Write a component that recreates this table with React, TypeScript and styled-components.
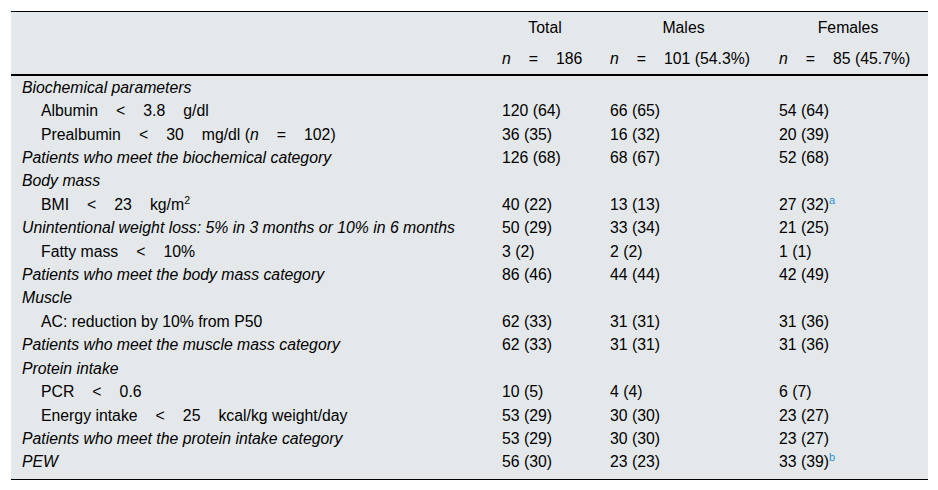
import React from "react";
import styled, { createGlobalStyle } from "styled-components";

const Global = createGlobalStyle`
  html, body { margin: 0; padding: 0; background: #ffffff; }
  body { font-family: "Liberation Sans", Arial, sans-serif; color: #000; }
`;

const Page = styled.div`
  padding: 11px 10px 0 11px;
`;

const Table = styled.table`
  width: 917px;
  border-collapse: collapse;
  table-layout: fixed;
  background: #e4e8eb;
  font-size: 15.8px;
  line-height: 17.4px;
  border-top: 1px solid #000;
  border-bottom: 1.5px solid #000;
`;

const Head = styled.thead`
  border-bottom: 2px solid #000;
`;

const HeadCell = styled.th<{ $left?: boolean }>`
  font-weight: normal;
  text-align: ${(p) => (p.$left ? "left" : "center")};
  padding: 7px 11px ${(p) => (p.$left ? "6px" : "7px")};
  white-space: nowrap;
`;

const Row = styled.tr<{ $last?: boolean }>`
  & > td {
    padding-bottom: ${(p) => (p.$last ? "8px" : "3px")};
  }
`;

const Label = styled.td<{ $indent?: boolean; $italic?: boolean }>`
  padding: 3px 11px 3px ${(p) => (p.$indent ? "30px" : "11px")};
  font-style: ${(p) => (p.$italic ? "italic" : "normal")};
  white-space: nowrap;
`;

const Value = styled.td`
  padding: 3px 11px;
  white-space: nowrap;
`;

const Sp = styled.span`
  display: inline-block;
  width: 18px;
`;

const Em = styled.i`
  font-style: italic;
`;

const Sup = styled.span`
  font-size: 10.5px;
  line-height: 0;
  vertical-align: baseline;
  position: relative;
  top: -6px;
`;

const Note = styled.span`
  font-size: 11px;
  line-height: 0;
  vertical-align: baseline;
  position: relative;
  top: -6px;
  color: #2a8fd4;
`;

type RowData = {
  label: React.ReactNode;
  kind: "head" | "item";
  total?: string;
  males?: string;
  females?: string;
  note?: string;
};

const rows: RowData[] = [
  { label: "Biochemical parameters", kind: "head" },
  {
    label: (
      <>
        Albumin<Sp />&lt;<Sp />3.8<Sp />g/dl
      </>
    ),
    kind: "item",
    total: "120 (64)",
    males: "66 (65)",
    females: "54 (64)",
  },
  {
    label: (
      <>
        Prealbumin<Sp />&lt;<Sp />30<Sp />mg/dl (<Em>n</Em>
        <Sp />=<Sp />
        102)
      </>
    ),
    kind: "item",
    total: "36 (35)",
    males: "16 (32)",
    females: "20 (39)",
  },
  {
    label: "Patients who meet the biochemical category",
    kind: "head",
    total: "126 (68)",
    males: "68 (67)",
    females: "52 (68)",
  },
  { label: "Body mass", kind: "head" },
  {
    label: (
      <>
        BMI<Sp />&lt;<Sp />23<Sp />kg/m<Sup>2</Sup>
      </>
    ),
    kind: "item",
    total: "40 (22)",
    males: "13 (13)",
    females: "27 (32)",
    note: "a",
  },
  {
    label: "Unintentional weight loss: 5% in 3 months or 10% in 6 months",
    kind: "head",
    total: "50 (29)",
    males: "33 (34)",
    females: "21 (25)",
  },
  {
    label: (
      <>
        Fatty mass<Sp />&lt;<Sp />10%
      </>
    ),
    kind: "item",
    total: "3 (2)",
    males: "2 (2)",
    females: "1 (1)",
  },
  {
    label: "Patients who meet the body mass category",
    kind: "head",
    total: "86 (46)",
    males: "44 (44)",
    females: "42 (49)",
  },
  { label: "Muscle", kind: "head" },
  {
    label: "AC: reduction by 10% from P50",
    kind: "item",
    total: "62 (33)",
    males: "31 (31)",
    females: "31 (36)",
  },
  {
    label: "Patients who meet the muscle mass category",
    kind: "head",
    total: "62 (33)",
    males: "31 (31)",
    females: "31 (36)",
  },
  { label: "Protein intake", kind: "head" },
  {
    label: (
      <>
        PCR<Sp />&lt;<Sp />0.6
      </>
    ),
    kind: "item",
    total: "10 (5)",
    males: "4 (4)",
    females: "6 (7)",
  },
  {
    label: (
      <>
        Energy intake<Sp />&lt;<Sp />25<Sp />kcal/kg weight/day
      </>
    ),
    kind: "item",
    total: "53 (29)",
    males: "30 (30)",
    females: "23 (27)",
  },
  {
    label: "Patients who meet the protein intake category",
    kind: "head",
    total: "53 (29)",
    males: "30 (30)",
    females: "23 (27)",
  },
  {
    label: "PEW",
    kind: "head",
    total: "56 (30)",
    males: "23 (23)",
    females: "33 (39)",
    note: "b",
  },
];

const NCount = ({ value }: { value: string }) => (
  <>
    <Em>n</Em>
    <Sp />=<Sp />
    {value}
  </>
);

export default function App() {
  return (
    <Page>
      <Global />
      <Table>
        <colgroup>
          <col style={{ width: 480 }} />
          <col style={{ width: 108 }} />
          <col style={{ width: 169 }} />
          <col style={{ width: 160 }} />
        </colgroup>
        <Head>
          <tr>
            <HeadCell />
            <HeadCell>Total</HeadCell>
            <HeadCell>Males</HeadCell>
            <HeadCell>Females</HeadCell>
          </tr>
          <tr>
            <HeadCell $left />
            <HeadCell $left>
              <NCount value="186" />
            </HeadCell>
            <HeadCell $left>
              <NCount value="101 (54.3%)" />
            </HeadCell>
            <HeadCell $left>
              <NCount value="85 (45.7%)" />
            </HeadCell>
          </tr>
        </Head>
        <tbody>
          {rows.map((r, i) => (
            <Row key={i} $last={i === rows.length - 1}>
              <Label $indent={r.kind === "item"} $italic={r.kind === "head"}>
                {r.label}
              </Label>
              <Value>{r.total}</Value>
              <Value>{r.males}</Value>
              <Value>
                {r.females}
                {r.note && <Note>{r.note}</Note>}
              </Value>
            </Row>
          ))}
        </tbody>
      </Table>
    </Page>
  );
}
